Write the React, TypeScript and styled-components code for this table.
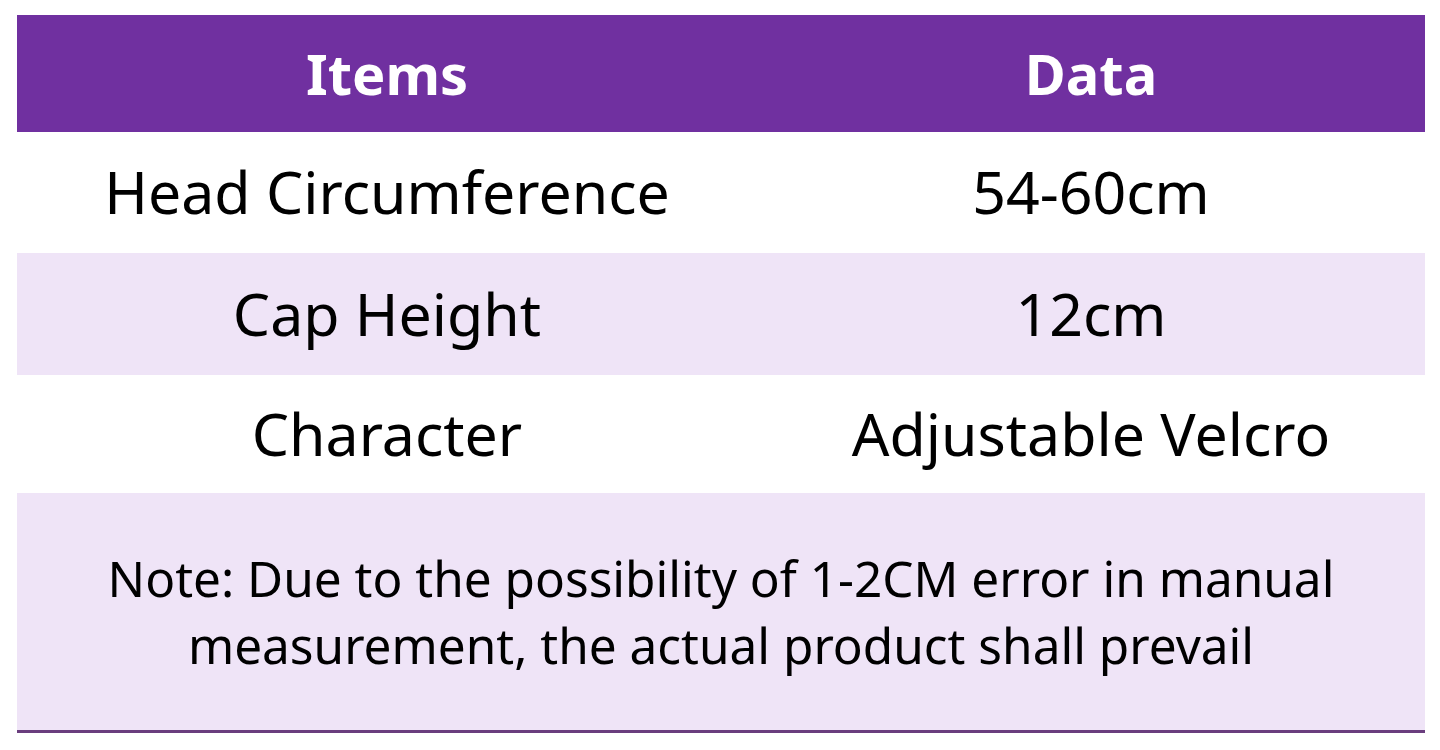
import React from 'react';
import styled, { createGlobalStyle } from 'styled-components';

const rows = [
  { item: 'Head Circumference', data: '54-60cm', shaded: false, height: 121 },
  { item: 'Cap Height', data: '12cm', shaded: true, height: 122 },
  { item: 'Character', data: 'Adjustable Velcro', shaded: false, height: 118 },
];

const App: React.FC = () => {
  return (
    <>
      <GlobalStyle />
      <Page>
        <SizeTable>
          <HeaderRow>
            <HeaderCell>Items</HeaderCell>
            <HeaderCell>Data</HeaderCell>
          </HeaderRow>
          {rows.map((row) => (
            <Row key={row.item} $shaded={row.shaded} $height={row.height}>
              <Cell>{row.item}</Cell>
              <Cell>{row.data}</Cell>
            </Row>
          ))}
          <NoteRow>
            <NoteText>
              Note: Due to the possibility of 1-2CM error in manual
              <br />
              measurement, the actual product shall prevail
            </NoteText>
          </NoteRow>
        </SizeTable>
      </Page>
    </>
  );
};

// Styled components
const GlobalStyle = createGlobalStyle`
  body {
    margin: 0;
    background: #ffffff;
    font-family: 'Noto Sans', 'Open Sans', sans-serif;
  }
`;

const Page = styled.div`
  width: 1440px;
  height: 750px;
  padding: 15px 0 0 17px;
  box-sizing: border-box;
`;

const SizeTable = styled.div`
  width: 1408px;
  display: flex;
  flex-direction: column;
`;

const HeaderRow = styled.div`
  display: grid;
  grid-template-columns: 740px 1fr;
  height: 117px;
  background-color: #7030a0;
`;

const HeaderCell = styled.div`
  display: flex;
  align-items: center;
  justify-content: center;
  padding-bottom: 2px;
  color: #ffffff;
  font-size: 56px;
  font-weight: 700;
`;

const Row = styled.div<{ $shaded: boolean; $height: number }>`
  display: grid;
  grid-template-columns: 740px 1fr;
  height: ${(p) => p.$height}px;
  background-color: ${(p) => (p.$shaded ? '#efe4f7' : '#ffffff')};
`;

const Cell = styled.div`
  display: flex;
  align-items: center;
  justify-content: center;
  padding-bottom: 3px;
  color: #000000;
  font-size: 59px;
`;

const NoteRow = styled.div`
  height: 237px;
  background-color: #efe4f7;
  border-bottom: 3px solid #6a3d7e;
  display: flex;
  align-items: center;
  justify-content: center;
`;

const NoteText = styled.p`
  margin: 0;
  text-align: center;
  color: #000000;
  font-size: 49.5px;
  line-height: 67px;
`;

export default App;
